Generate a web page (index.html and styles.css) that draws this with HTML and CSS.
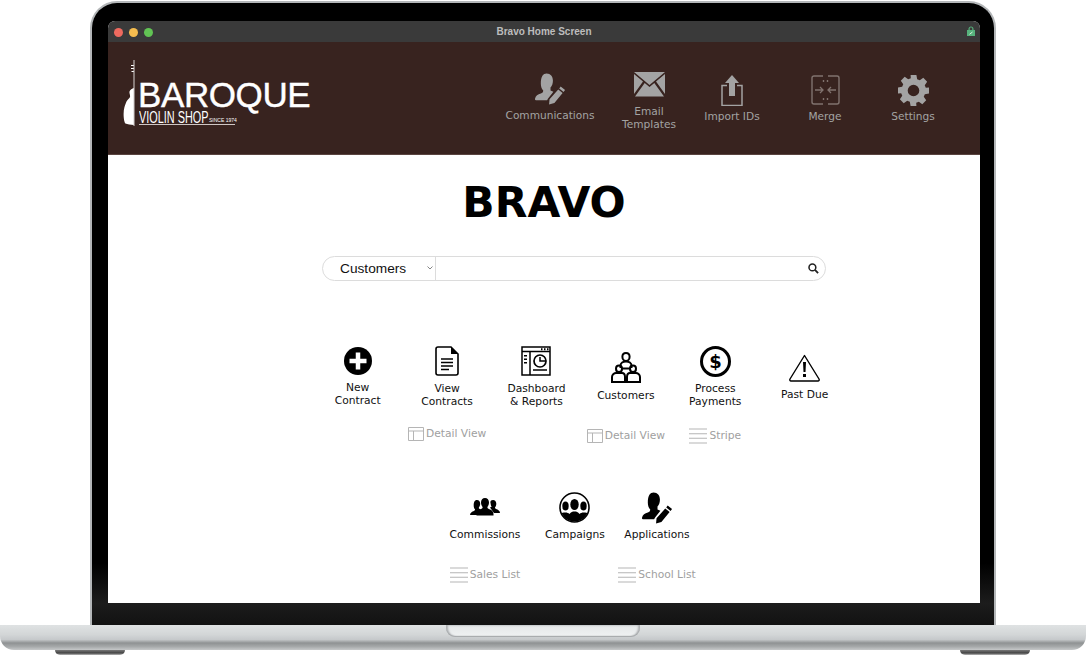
FILE: index.html
```html
<!DOCTYPE html>
<html lang="en">
<head>
    <meta charset="UTF-8">
    <meta name="viewport" content="width=device-width, initial-scale=1.0">
    <title>Bravo Home Screen</title>
    <link rel="stylesheet" href="styles.css">
</head>
<body>
    <svg class="sprites" width="0" height="0">
        <symbol id="personPencil" viewBox="0 0 32 32">
            <path d="M12 0c4 0 6.500 3 6.500 7.500 0 3-1 5.500-2.500 7v3l3 1.400-5.500 7-1 1.600H1c-.7 0-1.200-.6-1-1.500.6-3 3-4.300 6-5.300 1.700-.6 2.500-1.500 2.500-3.200-1.500-1.500-2.500-4-2.500-7C6 3 8.500 0 12 0z"/>
            <path d="M26.500 13.500l4.500 3.500-1.500 2-4.500-3.500zM24 16.500l4.500 3.500-8.500 10.500-5.500 1.500.5-5.500z"/>
        </symbol>
        <symbol id="detailView" viewBox="0 0 16 14">
            <path d="M.5.5h15v13H.5zM.5 4h15M5.500 4v9.500" fill="none" stroke="currentColor"/>
        </symbol>
        <symbol id="listLines" viewBox="0 0 18 16">
            <path d="M0 1h18M0 5.700h18M0 10.300h18M0 15h18" fill="none" stroke="currentColor" stroke-width="1.100"/>
        </symbol>
        <symbol id="threePeople" viewBox="0 0 30 18">
            <path d="M7 2c2 0 3.200 1.500 3.200 3.700 0 1.500-.6 2.800-1.300 3.600v1.200l2 1-4 5.500H0c0-2.500 2-3.400 4-4.100.8-.4 1-.9 1-1.600-.8-.8-1.300-2.200-1.300-3.600C3.700 3.500 5 2 7 2zM23 2c2 0 3.300 1.500 3.300 3.700 0 1.400-.5 2.800-1.300 3.600 0 .7.200 1.200 1 1.600 2 .7 4 1.600 4 4.100h-6l-4-5.500 2-1V9.300c-.7-.8-1.300-2.100-1.300-3.600C19.800 3.500 21 2 23 2z"/>
            <path d="M15 0c2.500 0 4 1.800 4 4.500 0 1.800-.7 3.400-1.600 4.400 0 1 .4 1.500 1.400 2 2.700 1 4.700 2 4.700 5.100v1.500H6.500V16c0-3 2-4.100 4.700-5.100 1-.5 1.400-1 1.400-2-.9-1-1.600-2.600-1.600-4.400C11 1.800 12.500 0 15 0z"/>
        </symbol>
    </svg>

    <div class="laptop">
        <div class="lid">
            <div class="screen">
                <div class="titlebar">
                    <div class="lights">
                        <span class="light light-red"></span>
                        <span class="light light-yellow"></span>
                        <span class="light light-green"></span>
                    </div>
                    <div class="window-title">Bravo Home Screen</div>
                    <svg class="lock" viewBox="0 0 8 10" width="8" height="10">
                        <path d="M1.500 4V2.800C1.500 1.300 2.600.4 4 .4s2.500.9 2.500 2.400V4H8v6H0V4zM2.700 4h2.600V2.800C5.300 2 4.800 1.500 4 1.500S2.700 2 2.700 2.800z" fill="#56b27c"/>
                        <path d="M2.500 8.300L5.500 6" stroke="#d8f0e0" stroke-width="1"/>
                    </svg>
                </div>

                <div class="header">
                    <div class="logo">
                        <svg class="violin" viewBox="0 0 14 66" width="14" height="66">
                            <path d="M10.600 0h.8v66h-.8z" fill="#fff"/>
                            <path d="M8 5h2.800v1H8zM8 8h2.800v1H8zM8.500 11h2.300v1H8.500z" fill="#fff"/>
                            <path d="M10.800 28c-1.500.6-3.800 1.800-4.300 3.600-.4 1.600.8 3.300.6 5-.2 1.800-2.300 2.500-3.600 5C2 45 .6 49 .6 54c0 4.500.8 8.700 1.800 9.600 2 .8 5.400 1.400 8.400 1.400z" fill="#fff"/>
                        </svg>
                        <div class="logo-text">
                            <div class="logo-name">BAROQUE</div>
                            <div class="logo-sub">
                                <span class="logo-shop">VIOLIN SHOP</span>
                                <span class="logo-since">SINCE 1974</span>
                            </div>
                        </div>
                    </div>

                    <div class="nav">
                        <div class="nav-item">
                            <svg class="nav-icon icon-comm" width="31" height="32"><use href="#personPencil"/></svg>
                            <div class="nav-label">Communications</div>
                        </div>
                        <div class="nav-item">
                            <svg class="nav-icon icon-mail" viewBox="0 0 31 25" width="31" height="25">
                                <path d="M0 0h31L15.500 13zM0 2l9 7.500L0 22zM31 2l-9 7.500L31 22zM1 24.500l9.700-13.500 4.800 4 4.800-4L30 24.500z"/>
                            </svg>
                            <div class="nav-label">Email<br>Templates</div>
                        </div>
                        <div class="nav-item">
                            <svg class="nav-icon icon-import" viewBox="0 0 22 31" width="22" height="31">
                                <path d="M11 0l7 8h-4v13H8V8H4z"/>
                                <path d="M6 10.500H1v20h20v-20h-5" fill="none" stroke="currentColor" stroke-width="1.500"/>
                            </svg>
                            <div class="nav-label">Import IDs</div>
                        </div>
                        <div class="nav-item">
                            <svg class="nav-icon icon-merge" viewBox="0 0 29 30" width="29" height="30">
                                <path d="M12 1H3C1.800 1 1 1.800 1 3v24c0 1.200.8 2 2 2h9M17 1h9c1.200 0 2 .8 2 2v24c0 1.200-.8 2-2 2h-9M12.500 5v2M12.500 23v2M16.500 5v2M16.500 23v2" fill="none" stroke="currentColor" stroke-width="1.400"/>
                                <path d="M4 15h8M9 12l3 3-3 3M25 15h-8M20 12l-3 3 3 3" fill="none" stroke="currentColor" stroke-width="1.300"/>
                            </svg>
                            <div class="nav-label">Merge</div>
                        </div>
                        <div class="nav-item">
                            <svg class="nav-icon icon-gear" viewBox="0 0 32 32" width="31" height="31">
                                <path fill-rule="evenodd" d="M13 0h6l.8 4.300 2.700 1.100 3.600-2.500 4 4-2.500 3.600 1.100 2.700L32 13v6l-4.300.8-1.100 2.700 2.500 3.600-4 4-3.600-2.500-2.700 1.100L19 32h-6l-.8-4.300-2.700-1.100-3.600 2.500-4-4 2.500-3.600-1.100-2.700L0 19v-6l4.300-.8 1.100-2.700L2.900 5.900l4-4 3.600 2.500 2.700-1.100zM16 10a6 6 0 1 0 0 12 6 6 0 0 0 0-12z"/>
                            </svg>
                            <div class="nav-label">Settings</div>
                        </div>
                    </div>
                </div>

                <div class="main">
                    <h1 class="app-title">BRAVO</h1>

                    <div class="search">
                        <div class="search-type">
                            <span>Customers</span>
                            <svg class="chevron" viewBox="0 0 6 4" width="6" height="4"><path d="M.5.5L3 3 5.500.5" fill="none" stroke="#777" stroke-width=".9"/></svg>
                        </div>
                        <div class="search-input">
                            <svg viewBox="0 0 12 12" width="11" height="11"><circle cx="4.800" cy="4.800" r="3.700" fill="none" stroke="#222" stroke-width="1.700"/><path d="M7.600 7.600L11 11" stroke="#222" stroke-width="2"/></svg>
                        </div>
                    </div>

                    <div class="tiles tiles-top">
                        <div class="tile tile-new">
                            <svg viewBox="0 0 28 28" width="28" height="28">
                                <circle cx="14" cy="14" r="14"/>
                                <path d="M14 5.500v17M5.500 14h17" stroke="#fff" stroke-width="4.500"/>
                            </svg>
                            <div class="tile-label">New<br>Contract</div>
                        </div>
                        <div class="tile">
                            <svg viewBox="0 0 24 30" width="24" height="30">
                                <path d="M16 1H3C1.800 1 1 1.800 1 3v24c0 1.200.8 2 2 2h18c1.200 0 2-.8 2-2V8z" fill="none" stroke="#000" stroke-width="1.600"/>
                                <path d="M16 1v7h7z" fill="#000"/>
                                <path d="M6 13h12M6 16.500h12M6 20h12M6 23.500h8" stroke="#000" stroke-width="1.300"/>
                            </svg>
                            <div class="tile-label">View<br>Contracts</div>
                        </div>
                        <div class="tile">
                            <svg viewBox="0 0 30 30" width="30" height="30">
                                <path d="M1 1h28v28H1zM1 5.500h28M9 5.500V29" fill="none" stroke="#000" stroke-width="1.500"/>
                                <path d="M20 2.300h1.500v2H20zM23 2.300h1.500v2H23zM26 2.300h1.500v2H26zM3 9h3v1.400H3zM3 12.500h3v1.400H3zM3 16h3v1.400H3z" fill="#000"/>
                                <circle cx="19" cy="15" r="6" fill="none" stroke="#000" stroke-width="1.700"/>
                                <path d="M19 11v4h5" fill="none" stroke="#000" stroke-width="1.500"/>
                                <path d="M12 24h14" stroke="#000" stroke-width="1.500"/>
                            </svg>
                            <div class="tile-label">Dashboard<br>&amp; Reports</div>
                        </div>
                        <div class="tile tile-low">
                            <svg viewBox="0 0 30 31" width="30" height="31">
                                <g fill="none" stroke="#000" stroke-width="2">
                                    <path d="M15 1c2.200 0 3.600 1.700 3.600 3.800S17.200 9 15 9s-3.600-2.100-3.600-4.200S12.800 1 15 1z"/>
                                    <path d="M9.500 16v-2.500C9.500 11 12 9.500 15 9.500s5.500 1.500 5.500 4V16"/>
                                    <path d="M8 13.500c1.800 0 3 1.400 3 3.200s-1.200 3.300-3 3.300-3-1.500-3-3.300 1.200-3.200 3-3.200zM22 13.500c1.800 0 3 1.400 3 3.200S23.800 20 22 20s-3-1.500-3-3.300 1.200-3.200 3-3.200z"/>
                                    <path d="M1 30v-5c0-2.500 2.500-4 4-4h6c1.500 0 3 1.500 3 4v5zM16 30v-5c0-2.500 1.500-4 3-4h6c1.500 0 4 1.500 4 4v5z"/>
                                    <path d="M11 16.500h8"/>
                                </g>
                            </svg>
                            <div class="tile-label">Customers</div>
                        </div>
                        <div class="tile tile-pay">
                            <svg viewBox="0 0 31 31" width="31" height="31">
                                <circle cx="15.500" cy="15.500" r="14" fill="none" stroke="#000" stroke-width="3"/>
                                <text class="dollar" x="15.500" y="22" text-anchor="middle">$</text>
                            </svg>
                            <div class="tile-label">Process<br>Payments</div>
                        </div>
                        <div class="tile tile-warn">
                            <svg viewBox="0 0 31 28" width="31" height="28">
                                <path d="M15.500 1.500L30 25c.5 1 0 2-1 2H2c-1 0-1.500-1-1-2z" fill="none" stroke="#000" stroke-width="1.400" stroke-linejoin="round"/>
                                <path d="M14 8h3l-.5 10h-2zM14 20h3v3h-3z" fill="#000"/>
                            </svg>
                            <div class="tile-label">Past Due</div>
                        </div>

                        <div class="sub-link sub-col2 sub-high">
                            <svg width="16" height="14"><use href="#detailView"/></svg>Detail View
                        </div>
                        <div class="sub-link sub-col4">
                            <svg width="16" height="14"><use href="#detailView"/></svg>Detail View
                        </div>
                        <div class="sub-link sub-col5">
                            <svg width="18" height="16"><use href="#listLines"/></svg>Stripe
                        </div>
                    </div>

                    <div class="tiles tiles-bottom">
                        <div class="tile tile-commissions">
                            <svg width="30" height="18"><use href="#threePeople"/></svg>
                            <div class="tile-label">Commissions</div>
                        </div>
                        <div class="tile tile-campaigns">
                            <svg viewBox="0 0 31 31" width="31" height="31">
                                <defs><clipPath id="campaignClip"><circle cx="15.500" cy="15.500" r="14"/></clipPath></defs>
                                <g clip-path="url(#campaignClip)">
                                    <ellipse cx="15.500" cy="12.500" rx="4.200" ry="5.500"/>
                                    <ellipse cx="6.500" cy="14" rx="3.200" ry="4.500"/>
                                    <ellipse cx="24.500" cy="14" rx="3.200" ry="4.500"/>
                                    <path d="M0 31v-8c2-2 4-2.500 6.500-2.500 1.500 0 3 .5 4 1.500 1.500-2 3-2.500 5-2.500s3.500.5 5 2.500c1-1 2.500-1.500 4-1.500 2.500 0 4.500.5 6.500 2.500v8z"/>
                                </g>
                                <circle cx="15.500" cy="15.500" r="14.500" fill="none" stroke="#000" stroke-width="1.600"/>
                            </svg>
                            <div class="tile-label">Campaigns</div>
                        </div>
                        <div class="tile tile-apps">
                            <svg width="31" height="32"><use href="#personPencil"/></svg>
                            <div class="tile-label">Applications</div>
                        </div>

                        <div class="sub-link sub-col1">
                            <svg width="18" height="16"><use href="#listLines"/></svg>Sales List
                        </div>
                        <div class="sub-link sub-col3">
                            <svg width="18" height="16"><use href="#listLines"/></svg>School List
                        </div>
                    </div>
                </div>
            </div>
        </div>

        <div class="base">
            <div class="notch"></div>
        </div>
        <div class="feet">
            <div class="foot"></div>
            <div class="foot"></div>
        </div>
    </div>
</body>
</html>
```

FILE: styles.css
```css
body {margin: 0; background-color: #fff; font-family: "DejaVu Sans", sans-serif; overflow: hidden;}
.sprites {display: block;}

.laptop {width: 1086px; height: 656px; display: flex; flex-direction: column;}
.lid {width: 906px; height: 624px; margin: 1px 0 0 90px; padding: 18px 14px 0 16px; box-sizing: border-box; background: linear-gradient(#000 0, #000 560px, #1c1c1c 600px, #111 624px); border: 2px solid #b4b7b9; border-bottom: none; border-radius: 27px 27px 0 0;}
.screen {height: 582px; display: flex; flex-direction: column; border-radius: 7px 7px 0 0; overflow: hidden; background-color: #fff;}

.titlebar {height: 21px; flex: none; display: flex; align-items: center; position: relative; background-color: #3a3a3a;}
.lights {display: flex; gap: 6px; padding: 1px 0 0 6px;}
.light {width: 9px; height: 9px; border-radius: 50%;}
.light-red {background-color: #ee6a5f;}
.light-yellow {background-color: #f5bd4f;}
.light-green {background-color: #61c454;}
.window-title {position: absolute; left: 0; right: 0; text-align: center; font: bold 10px "Liberation Sans", sans-serif; color: #bdbdbd;}
.lock {margin-left: auto; margin-right: 5px; margin-top: -2px;}

.header {height: 113px; flex: none; display: flex; background-color: #38231f; border-bottom: 1px solid #5a4440; box-sizing: border-box;}
.logo {display: flex; padding: 18px 0 0 15px; color: #fff; width: 300px;}
.violin {flex: none;}
.logo-text {margin: 22px 0 0 1px; font-family: "Liberation Sans", sans-serif;}
.logo-name {font-size: 35px; line-height: 26px; letter-spacing: -0.4px; -webkit-text-stroke: 0.4px #fff;}
.logo-sub {display: flex; align-items: flex-end; width: 96px; margin: 3px 0 0 1px; height: 13px; border-bottom: 1px solid #cfc6c4;}
.logo-shop {display: inline-block; width: 70px; font-size: 16px; line-height: 13px; white-space: nowrap; transform: scaleX(0.68); transform-origin: left;}
.logo-since {font-size: 5px; line-height: 8px; white-space: nowrap;}

.nav {display: grid; grid-template-columns: 98px 100px 66px 120px 56px; margin-left: auto; margin-right: 39px; padding-top: 30px;}
.nav-item {display: flex; flex-direction: column; align-items: center; color: #a3a3a3; fill: #a3a3a3;}
.nav-label {font-size: 10.6px; line-height: 13px; text-align: center; white-space: nowrap;}
.icon-comm {margin: 1px 0 4px 1px;}
.icon-mail {margin-bottom: 8px;}
.icon-import {margin: 3px 0 4px;}
.icon-merge {margin: 3px 0 5px; color: #80736f;}
.icon-gear {margin: 3px 0 4px;}

.main {flex: 1; display: flex; flex-direction: column;}
.app-title {margin: 24px 0 0; height: 46px; text-align: center; font-size: 42.5px; line-height: 47px; font-weight: bold; color: #000;}
.search {width: 504px; height: 25px; margin: 31px 0 0 214px; box-sizing: border-box; display: flex; border: 1px solid #dcdcdc; border-radius: 13px;}
.search-type {width: 113px; flex: none; box-sizing: border-box; display: flex; align-items: center; justify-content: space-between; padding: 0 2px 1px 17px; border-right: 1px solid #dcdcdc; font: 13.7px "Liberation Sans", sans-serif; color: #111;}
.search-input {flex: 1; display: flex; align-items: center; justify-content: flex-end; padding-right: 6px;}

.tiles {display: grid; justify-items: center; align-items: start; color: #000;}
.tiles-top {grid-template-columns: repeat(6, 89.4px); margin: 65px 0 0 205px;}
.tiles-bottom {grid-template-columns: 90px 90px 74px; margin: 0 0 0 332px; padding-top: 48px;}
.tile {display: flex; flex-direction: column; align-items: center; height: 58px;}
.tile svg {flex: none;}
.tile-label {margin-top: 6px; font-size: 10.7px; line-height: 13px; text-align: center; white-space: nowrap; color: #111;}
.tile-new {padding-top: 1px;}
.tile-low {padding-top: 6px;}
.tile-warn {padding-top: 8px;}
.tile-pay .tile-label {margin-top: 5px;}
.tiles-bottom .tile {height: 53px;}
.tile-commissions {padding-top: 6px;}
.tile-commissions .tile-label {margin-top: 12px;}
.tile-campaigns .tile-label {margin-top: 5px;}
.tile-apps .tile-label {margin-top: 4px;}
.tile-apps svg {margin-left: 2px;}
.dollar {font: bold 18px "DejaVu Sans", sans-serif; fill: #000;}

.sub-link {display: flex; align-items: center; gap: 2px; margin-top: 16px; font-size: 10.7px; line-height: 16px; color: #a0a0a0; white-space: nowrap;}
.sub-high {margin-top: 14px;}
.sub-link svg {flex: none; color: #b5b5b5;}
.sub-col1 {grid-column: 1;}
.sub-col2 {grid-column: 2;}
.sub-col3 {grid-column: 3;}
.sub-col4 {grid-column: 4;}
.sub-col5 {grid-column: 5;}

.base {height: 25px; flex: none; display: flex; justify-content: center; background: linear-gradient(#dfe2e3 0, #d3d6d7 38%, #c6c9cb 58%, #8f9293 72%, #a5a8a9 86%, #c6c8c9 100%); border-radius: 0 0 14px 14px;}
.notch {width: 194px; height: 12px; background: linear-gradient(#e4e7e8, #f0f2f3); border-radius: 0 0 9px 9px; box-shadow: inset 0 -1px 1px #a5a8aa, inset 2px 0 2px #b0b3b5, inset -2px 0 2px #b0b3b5;}
.feet {display: flex; justify-content: space-between; padding: 0 56px 0 55px;}
.foot {width: 70px; height: 5px; background: linear-gradient(#777, #444 60%, #bbb); border-radius: 0 0 12px 12px;}
```
